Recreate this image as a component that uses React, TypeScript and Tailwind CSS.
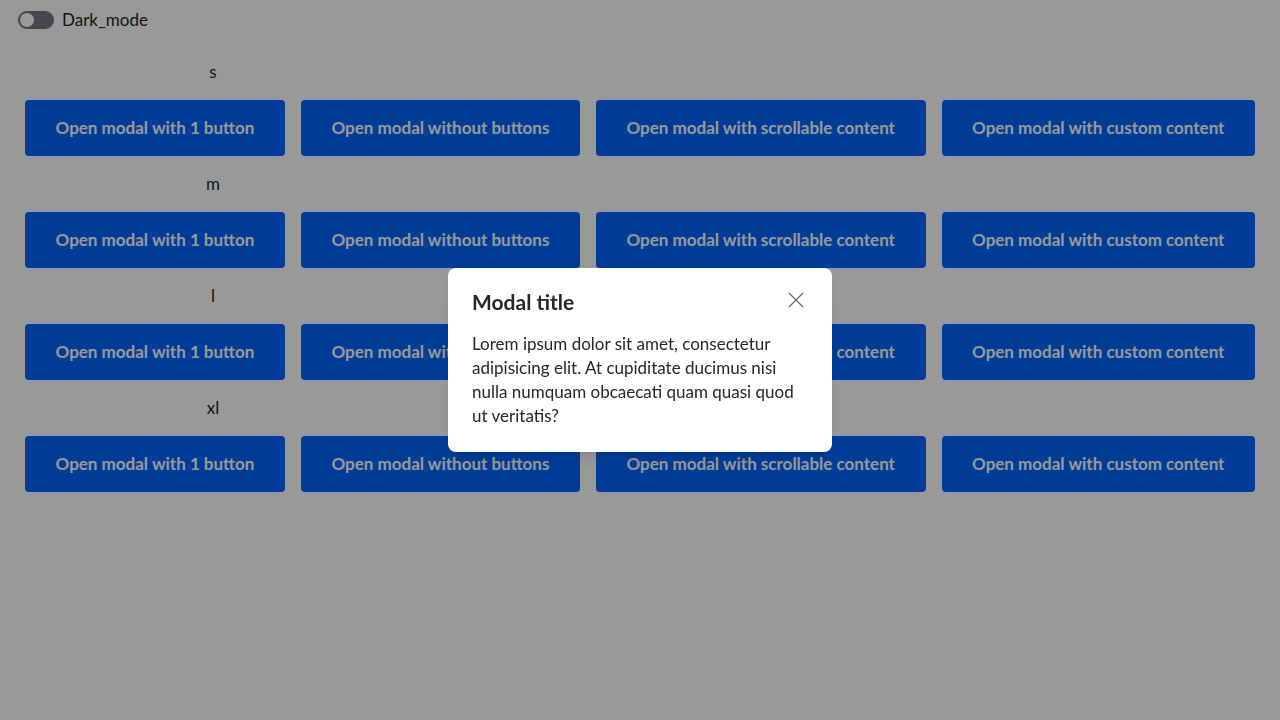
import React from 'react'

const sizes = ['s', 'm', 'l', 'xl']
const labels = [
  'Open modal with 1 button',
  'Open modal without buttons',
  'Open modal with scrollable content',
  'Open modal with custom content',
]

export default function App() {
  return (
    <div className="relative min-h-[720px] bg-white text-[#1f1f24] font-['Lato','Liberation_Sans',sans-serif]">
      <div className="flex h-6 items-center gap-2 pl-[18px] pt-2 box-content">
        <span className="relative inline-flex h-[18px] w-9 items-center rounded-full bg-[#737685]">
          <span className="ml-[2px] h-[14px] w-[14px] rounded-full bg-white" />
        </span>
        <span className="text-[17px] leading-6">Dark_mode</span>
      </div>

      <div className="mt-7 flex flex-col gap-4 px-[25px]">
        {sizes.map((s) => (
          <div key={s} className="flex flex-col gap-4">
            <div className="w-[376px] text-center text-[17px] leading-6">{s}</div>
            <div className="flex gap-4">
              {labels.map((l) => (
                <button
                  key={l}
                  className="h-14 flex-auto rounded bg-[#0066ff] px-[30px] text-[17px] font-bold text-white"
                >
                  {l}
                </button>
              ))}
            </div>
          </div>
        ))}
      </div>

      {/* overlay + modal */}
      <div className="fixed inset-0 flex items-center justify-center bg-black/40">
        <div className="w-[384px] rounded-lg bg-white p-6 shadow-lg">
          <div className="flex items-start justify-between">
            <h2 className="text-[21px] font-bold leading-5 text-[#26262b]">Modal title</h2>
            <button className="mr-1 text-[#6b6b73]">
              <svg width="16" height="16" viewBox="0 0 16 16" fill="none" stroke="currentColor" strokeWidth="1.3">
                <path d="M1 1L15 15M15 1L1 15" />
              </svg>
            </button>
          </div>
          <p className="mt-5 text-[17px] leading-6 text-[#26262b]">
            Lorem ipsum dolor sit amet, consectetur
            <br />
            adipisicing elit. At cupiditate ducimus nisi
            <br />
            nulla numquam obcaecati quam quasi quod
            <br />
            ut veritatis?
          </p>
        </div>
      </div>
    </div>
  )
}
